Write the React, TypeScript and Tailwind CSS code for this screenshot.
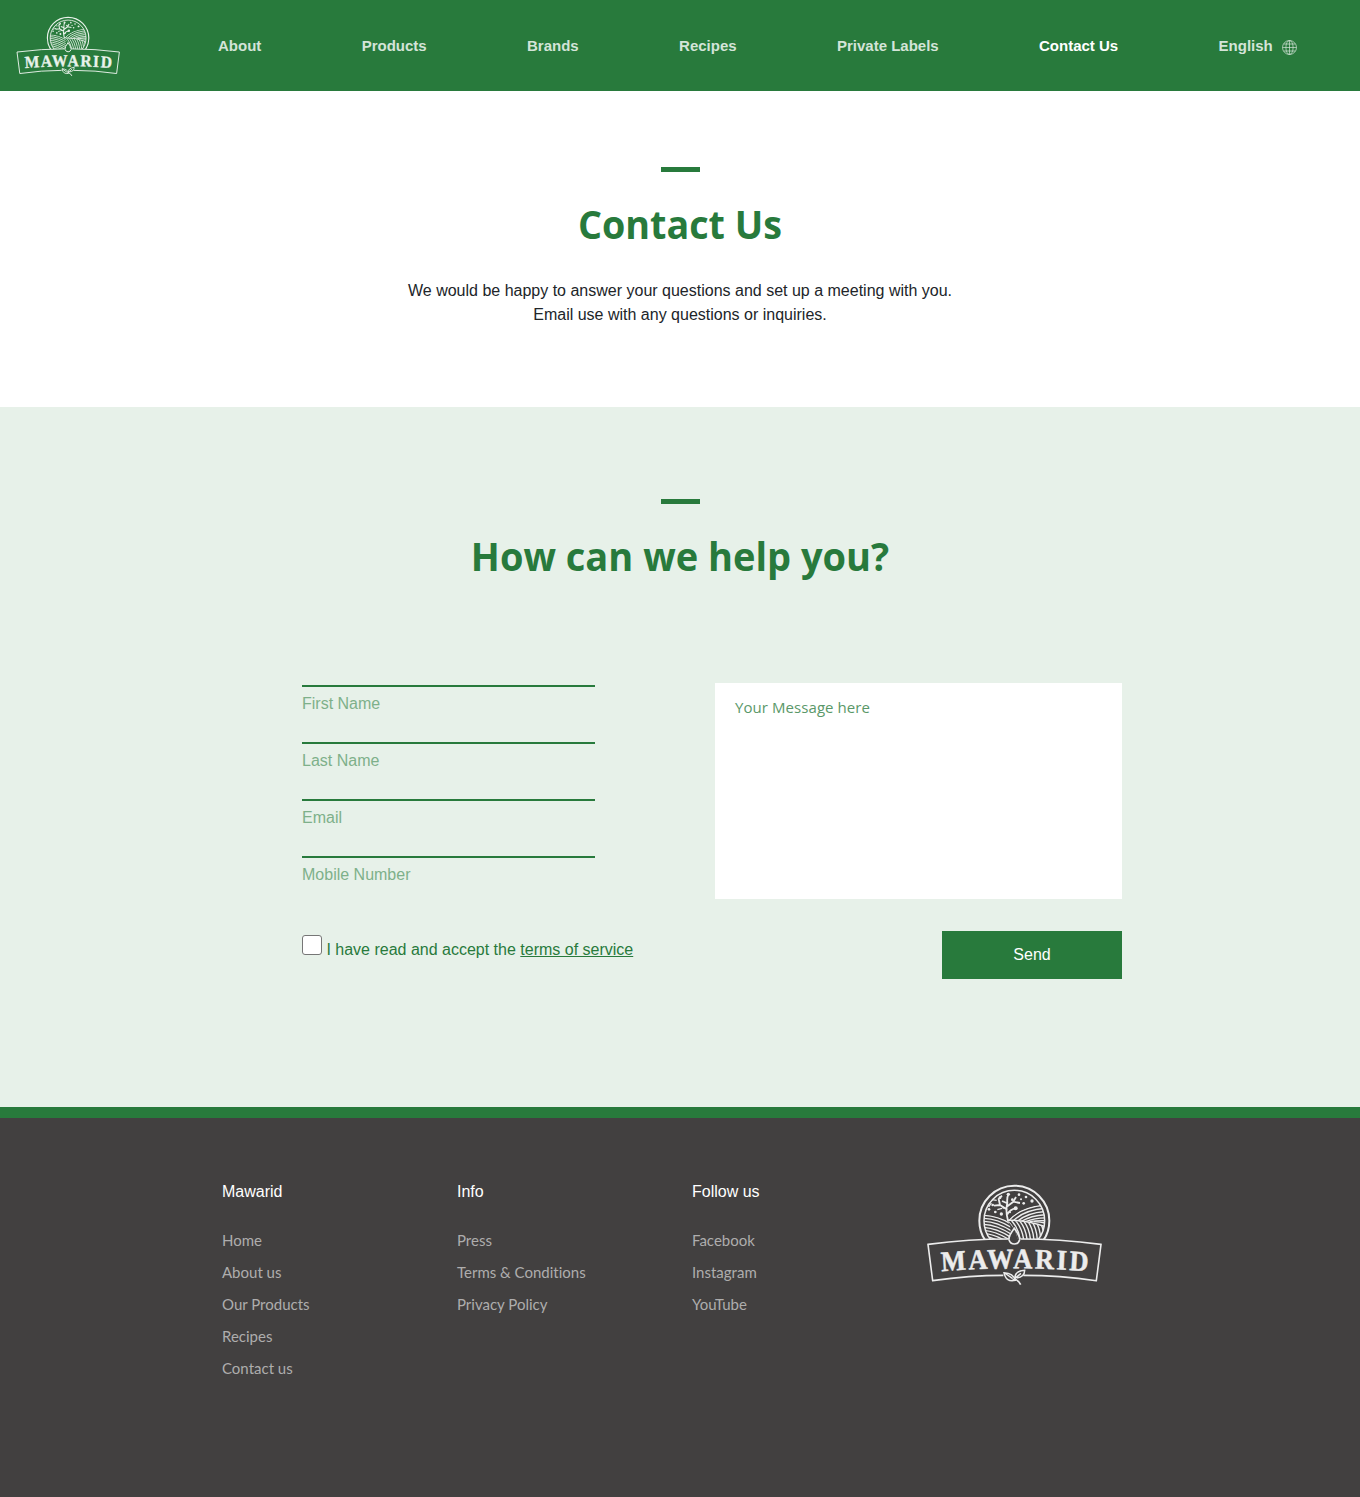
import React from "react";

const NAV = ["About", "Products", "Brands", "Recipes", "Private Labels", "Contact Us"];

const FIELDS = ["First Name", "Last Name", "Email", "Mobile Number"];

const COLUMNS = [
  { title: "Mawarid", links: ["Home", "About us", "Our Products", "Recipes", "Contact us"] },
  { title: "Info", links: ["Press", "Terms & Conditions", "Privacy Policy"] },
  { title: "Follow us", links: ["Facebook", "Instagram", "YouTube"] },
];

const FRUITS = [
  [265, 58, 5], [297, 59, 4], [318, 66, 4], [336, 78, 5], [311, 85, 4], [287, 100, 6],
  [277, 74, 4], [218, 90, 4], [207, 103, 4], [226, 111, 4], [244, 117, 5], [240, 68, 4],
  [303, 73, 3], [270, 112, 3], [250, 98, 3],
];

function Logo({ id, className }: { id: string; className: string }) {
  return (
    <svg viewBox="0 0 570 360" className={className} fill="none" stroke="currentColor" aria-label="Mawarid">
      <defs>
        <clipPath id={`${id}-sky`}>
          <path d="M0 0H570V193H0Z" />
        </clipPath>
        <clipPath id={`${id}-disc`}>
          <path d="M211 192 A91 91 0 1 1 355 192Z" />
        </clipPath>
        <clipPath id={`${id}-left`}>
          <path d="M180 118 Q232 118 265 139 Q277 160 268 200 L180 200Z" />
        </clipPath>
        <clipPath id={`${id}-hill`}>
          <path d="M264 136 Q300 92 385 88 L385 156 Q320 134 264 136Z" />
        </clipPath>
        <clipPath id={`${id}-right`}>
          <path d="M264 138 Q320 136 385 158 L360 200 L296 200 L284 164Z" />
        </clipPath>
        <path id={`${id}-arc`} d="M69 289 Q305 271 545 289" />
      </defs>

      {/* rings */}
      <g clipPath={`url(#${id}-sky)`}>
        <circle cx="283" cy="137" r="105" strokeWidth="6" />
        <circle cx="283" cy="137" r="91" strokeWidth="4.5" />
      </g>

      {/* fields and tree */}
      <g clipPath={`url(#${id}-disc)`}>
        <g clipPath={`url(#${id}-left)`} strokeWidth="4.2">
          {[0, 1, 2, 3, 4, 5, 6, 7, 8].map((i) => (
            <path key={i} d={`M180 ${121 + i * 9} Q${236 - i * 2} ${119 + i * 9} 285 ${155 + i * 10}`} />
          ))}
        </g>
        <g clipPath={`url(#${id}-hill)`} strokeWidth="4.2">
          {[0, 1, 2, 3, 4, 5, 6].map((i) => (
            <path key={i} d={`M${264 + i * 13} 140 Q${300 + i * 13} ${94 + i * 8} 390 ${89 + i * 10}`} />
          ))}
        </g>
        <g clipPath={`url(#${id}-right)`} strokeWidth="4.2">
          {[0, 1, 2, 3, 4, 5, 6, 7, 8, 9].map((i) => (
            <path key={i} d={`M${258 + i * 12} 132 Q${286 + i * 11} 158 ${292 + i * 10} 202`} />
          ))}
        </g>
        <path d="M262 136 Q320 134 378 156" strokeWidth="4.5" />
        <path
          d="M264 137 Q256 108 262 84 Q260 68 266 56 M262 104 L240 90 L222 92 M240 90 L236 72 L246 62 M262 94 L280 80 L300 84 M280 80 L288 66 M262 118 Q270 102 288 100 M260 84 L246 78"
          strokeWidth="5.5"
        />
        <path d="M204 82 L216 74 L230 76 M246 100 L232 104 M206 96 L214 84" strokeWidth="4" />
        {FRUITS.map(([x, y, r]) => (
          <circle key={`${x}-${y}`} cx={x} cy={y} r={r} fill="currentColor" stroke="none" />
        ))}
      </g>

      {/* banner */}
      <path
        d="M264 192 Q150 192 24 208 L38 317 Q150 301 250 301 M302 192 Q416 192 543 208 L529 317 Q420 301 310 301"
        strokeWidth="4.8"
      />
      <path d="M283 160 Q265 184 267 194 Q271 207 283 207 Q295 207 299 194 Q300 184 283 160Z" strokeWidth="5" />

      <g transform="scale(0.93 1)">
        <text
          className="font-['Liberation_Serif',serif] font-bold"
          fontSize="85"
          fill="currentColor"
          strokeWidth="1.6"
        >
          <textPath href={`#${id}-arc`} textLength="473" lengthAdjust="spacing">
            MAWARID
          </textPath>
        </text>
      </g>

      {/* leaves */}
      <path d="M252 293 Q258 323 286 316 Q280 294 252 293Z M254 294 L278 311" strokeWidth="4.5" />
      <path d="M285 309 Q284 288 314 286 Q314 306 290 309 M303 295 L278 316" strokeWidth="4.5" />
      <path d="M284 312 Q297 317 302 329" strokeWidth="5" />
    </svg>
  );
}

function Globe() {
  return (
    <svg viewBox="0 0 15 15" className="mt-[3px] ml-[9px] size-[15px]" fill="none" stroke="#d4e4d8" strokeWidth="0.7">
      <circle cx="7.5" cy="7.5" r="7" />
      <ellipse cx="7.5" cy="7.5" rx="3.6" ry="7" />
      <path d="M7.5 .5V14.5M.5 7.5H14.5M1.6 4H13.4M1.6 11H13.4" />
    </svg>
  );
}

function Title({ children, className }: { children: React.ReactNode; className: string }) {
  return (
    <>
      <div className="mx-auto h-[5px] w-[39px] bg-[#287a3c]" />
      <h2
        className={`mt-[22px] text-center font-['Open_Sans',sans-serif] text-[40px] leading-[60px] font-bold text-[#287a3c] ${className}`}
      >
        {children}
      </h2>
    </>
  );
}

export default function App() {
  return (
    <div className="w-[1360px] font-['Liberation_Sans',Arial,sans-serif] text-base">
      <header className="flex h-[91px] bg-[#287a3c] text-[#d4e4d8]">
        <Logo id="top" className="mt-[11px] ml-3 h-[71px] w-[113px] shrink-0 text-[#e9f2eb]" />
        <nav className="ml-[93px] flex h-[91px] items-center gap-[100.35px] pt-px text-[15px] font-bold whitespace-nowrap">
          {NAV.map((item) => (
            <a key={item} className={item === "Contact Us" ? "text-white" : ""}>
              {item}
            </a>
          ))}
          <a className="flex items-center">
            English
            <Globe />
          </a>
        </nav>
      </header>

      <section className="h-[316px] bg-white pt-[76px]">
        <Title className="scale-x-[0.942]">Contact Us</Title>
        <p className="mt-[25px] text-center leading-6 text-[#212529]">
          We would be happy to answer your questions and set up a meeting with you.
          <br />
          Email use with any questions or inquiries.
        </p>
      </section>

      <section className="h-[700px] bg-[#e7f1e9] pt-[92px]">
        <Title className="scale-x-[0.95]">How can we help you?</Title>
        <form className="mt-[73px] ml-[302px] flex w-[820px] justify-between">
          <div className="flex w-[340px] flex-col">
            {FIELDS.map((field) => (
              <label key={field} className="flex w-[293px] flex-col text-[#7eb08a]">
                <input className="h-7 border-b-2 border-[#287a3c] bg-transparent outline-none" />
                <span className="pt-[5px] leading-6">{field}</span>
              </label>
            ))}
            <div className="mt-[48px] flex text-[#287a3c]">
              <span className="size-5 rounded-[3px] border border-[#767676] bg-white" />
              <span className="ml-[4.4px] pt-[3px] leading-6 whitespace-nowrap">
                I have read and accept the <a className="underline">terms of service</a>
              </span>
            </div>
          </div>
          <div className="flex w-[407px] flex-col items-end pt-6">
            <textarea
              placeholder="Your Message here"
              className="block h-[216px] w-full resize-none bg-white px-5 py-3 font-['Open_Sans',sans-serif] text-[15px] leading-6 tracking-[0.07px] outline-none placeholder:text-[#5a9869]"
            />
            <button type="button" className="mt-8 h-12 w-[180px] bg-[#287a3c] pb-px text-white">
              Send
            </button>
          </div>
        </form>
      </section>

      <footer className="flex h-[390px] border-t-[11px] border-[#287a3c] bg-[#424040] pl-[222px]">
        {COLUMNS.map((col) => (
          <div key={col.title} className="w-[235px] pt-[62px]">
            <h3 className="leading-6 text-white">{col.title}</h3>
            <ul className="mt-5 font-['Lato',sans-serif] text-[15px] leading-8 text-[#aeadad] [font-variant-ligatures:none]">
              {col.links.map((link) => (
                <li key={link}>{link}</li>
              ))}
            </ul>
          </div>
        ))}
        <Logo id="bottom" className="mt-[57px] -ml-[7px] h-[120px] w-[190px] text-[#ececec]" />
      </footer>
    </div>
  );
}
